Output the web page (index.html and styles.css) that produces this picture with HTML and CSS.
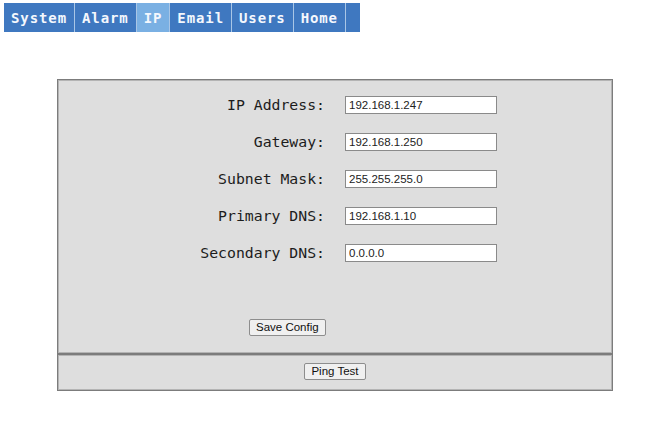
FILE: index.html
```html
<!DOCTYPE html>
<html>
<head>
<meta charset="utf-8">
<link rel="stylesheet" href="styles.css">
</head>
<body>
<nav class="nav">
  <a class="tab">System</a>
  <a class="tab">Alarm</a>
  <a class="tab active">IP</a>
  <a class="tab">Email</a>
  <a class="tab">Users</a>
  <a class="tab">Home</a>
  <span class="tab-end"></span>
</nav>
<main class="panel">
  <form class="box config">
    <div class="grid">
      <label class="lbl">IP Address:</label><input class="field" value="192.168.1.247">
      <label class="lbl">Gateway:</label><input class="field" value="192.168.1.250">
      <label class="lbl">Subnet Mask:</label><input class="field" value="255.255.255.0">
      <label class="lbl">Primary DNS:</label><input class="field" value="192.168.1.10">
      <label class="lbl">Secondary DNS:</label><input class="field" value="0.0.0.0">
    </div>
    <div class="save-row"><button type="button" class="btn">Save Config</button></div>
  </form>
  <div class="box ping">
    <button type="button" class="btn">Ping Test</button>
  </div>
</main>
</body>
</html>
```

FILE: styles.css
```css
html, body {
  margin: 0;
  background: #ffffff;
}
body {
  padding: 3px 4px;
}
.nav {
  display: flex;
  width: max-content;
  background: #3f78c0;
  height: 29px;
  align-items: stretch;
}
.tab {
  display: flex;
  align-items: center;
  padding: 0 7px;
  font-family: "DejaVu Sans Mono", monospace;
  font-weight: bold;
  font-size: 14px;
  letter-spacing: 0.9px;
  color: #f4f7fd;
  border-right: 1px solid #a9c6e6;
  cursor: pointer;
}
.tab.active {
  background: #7ab0e3;
}
.tab-end {
  width: 14px;
}
.panel {
  width: 556px;
  margin: 47px 0 0 53px;
}
.box {
  background: #dedede;
  border: 1px solid #7c7c7c;
  box-shadow: inset 0 0 0 1px #b4b4b4;
}
.config {
  margin: 0;
  padding: 6px 0 17px 0;
}
.grid {
  display: grid;
  grid-template-columns: 266px 152px;
  column-gap: 20px;
  grid-auto-rows: 37px;
  align-items: center;
  margin-left: 1px;
}
.lbl {
  text-align: right;
  font-family: "DejaVu Sans Mono", monospace;
  font-size: 14.8px;
  color: #1c1c1c;
}
.field {
  box-sizing: border-box;
  width: 152px;
  height: 18px;
  margin: 0;
  padding: 0 3px;
  border: 1px solid #8a8a8a;
  background: #ffffff;
  font-family: "Liberation Sans", Arial, sans-serif;
  font-size: 11.5px;
  color: #222;
  outline: none;
}
.save-row {
  margin-top: 46px;
  padding-left: 191px;
}
.btn {
  box-sizing: border-box;
  height: 17px;
  margin: 0;
  padding: 0 6px;
  font-family: "Liberation Sans", Arial, sans-serif;
  font-size: 11.5px;
  color: #111;
  background: #f0f0f0;
  border: 1px solid #8d8d8d;
  border-radius: 2px;
  line-height: 15px;
}
.ping {
  height: 37px;
  box-sizing: border-box;
  padding-top: 8px;
  display: flex;
  align-items: flex-start;
  justify-content: center;
}
```
